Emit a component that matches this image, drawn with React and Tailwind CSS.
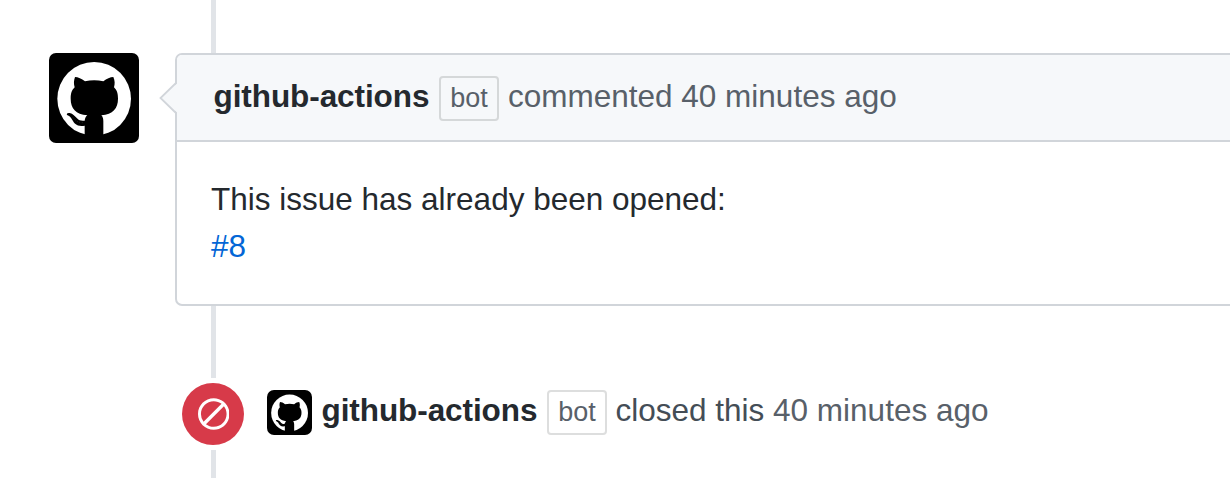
function Avatar({ className }) {
  return (
    <svg viewBox="0 0 270 270" className={className} role="img" aria-label="github-actions">
      <rect width="270" height="270" fill="#000" />
      <circle cx="135.500" cy="137.500" r="110.500" fill="#fff" />
      <path
        fill="#000"
        d="M78 72C87 72 98 77 108 85C126 81 145 81 163 85C173 77 184 72 193 72C198 83 198 93 195 103C204 112 207 121 207 137C207 166 192 184 157 187C161 191 163 197 163 205V252H107V218C83 222 76 211 70 201C66 193 61 189 54 186C52 181 56 179 62 180C72 182 78 190 84 196C90 203 98 204 107 203C108 196 110 191 115 187C80 184 65 166 65 137C65 121 68 112 77 103C74 93 74 83 78 72Z"
      />
      <path fill="none" stroke="#fff" strokeOpacity="0.400" strokeWidth="1.500" strokeDasharray="2 6" d="M72 194C80 205 90 210 106 209" />
    </svg>
  );
}

function BotLabel() {
  return (
    <span className="box-border flex h-[45px] w-[60px] shrink-0 items-center justify-center rounded-[4px] border-2 border-[#1b1f23]/15 text-[27px] leading-none text-[#586069]">
      bot
    </span>
  );
}

function Rail({ className }) {
  return <div className={`ml-[211px] w-[5px] shrink-0 bg-[#e1e4e8] ${className}`} />;
}

export default function App() {
  return (
    <main className="flex h-[478px] w-full flex-col overflow-hidden bg-white font-['Liberation_Sans',Arial,sans-serif] text-[31.5px] leading-[47px] text-[#24292e]">
      <Rail className="h-[53px]" />
      <section className="flex h-[253px] shrink-0 items-start pl-[49px]">
        <Avatar className="size-[90px] shrink-0 rounded-[7px]" />
        <article className="relative -mr-2 ml-9 flex h-full grow flex-col rounded-[7px] border-2 border-[#d1d5da] bg-white">
          <svg viewBox="0 0 19 34" className="absolute -left-[18px] top-[26px] h-[34px] w-[19px]">
            <path d="M19 1.500L2 17L19 32.500Z" fill="#f6f8fa" />
            <path d="M17.500 1.500L1.500 17L17.500 32.500" fill="none" stroke="#d1d5da" strokeWidth="1.800" />
          </svg>
          <header className="flex h-[87px] shrink-0 items-start rounded-t-[5px] border-b-2 border-[#d1d5da] bg-[#f6f8fa] pl-9 pt-[21px]">
            <strong className="-mt-[3px] w-[226px] pl-[0.5px] font-bold tracking-[-0.08px]">github-actions</strong>
            <BotLabel />
            <span className="-mt-[3px] ml-[9px] whitespace-nowrap text-[#586069]">commented 40 minutes ago</span>
          </header>
          <div className="pl-[34px] pt-[34px]">
            <p>This issue has already been opened:</p>
            <a href="#8" className="block text-[#0366d6]">#8</a>
          </div>
        </article>
      </section>
      <Rail className="h-[72px]" />
      <section className="my-[5px] flex h-[62px] shrink-0 items-start pl-[182px]">
        <div className="flex size-[62px] shrink-0 items-center justify-center rounded-full bg-[#d73a49] pl-px">
          <svg viewBox="0 0 14 16" className="h-9 w-[31.5px] text-white" fill="currentColor">
            <path d="M7 1C3.140 1 0 4.140 0 8s3.140 7 7 7 7-3.140 7-7-3.140-7-7-7zm0 1.300c1.300 0 2.500.440 3.470 1.170l-8 8A5.755 5.755 0 0 1 1.300 8c0-3.140 2.560-5.700 5.700-5.700zm0 11.410c-1.300 0-2.500-.440-3.470-1.170l8-8c.730.970 1.170 2.170 1.170 3.470 0 3.140-2.560 5.700-5.700 5.700z" />
          </svg>
        </div>
        <div className="ml-[23px] flex items-start pt-[7px]">
          <Avatar className="size-[45px] shrink-0 rounded-[7px]" />
          <strong className="-mt-[3px] ml-[9px] w-[226px] pl-[0.5px] font-bold tracking-[-0.08px]">github-actions</strong>
          <BotLabel />
          <span className="-mt-[3px] ml-[8.5px] whitespace-nowrap text-[#444d56]">
            closed this <span className="text-[#586069]">40 minutes ago</span>
          </span>
        </div>
      </section>
      <Rail className="h-7" />
    </main>
  );
}
